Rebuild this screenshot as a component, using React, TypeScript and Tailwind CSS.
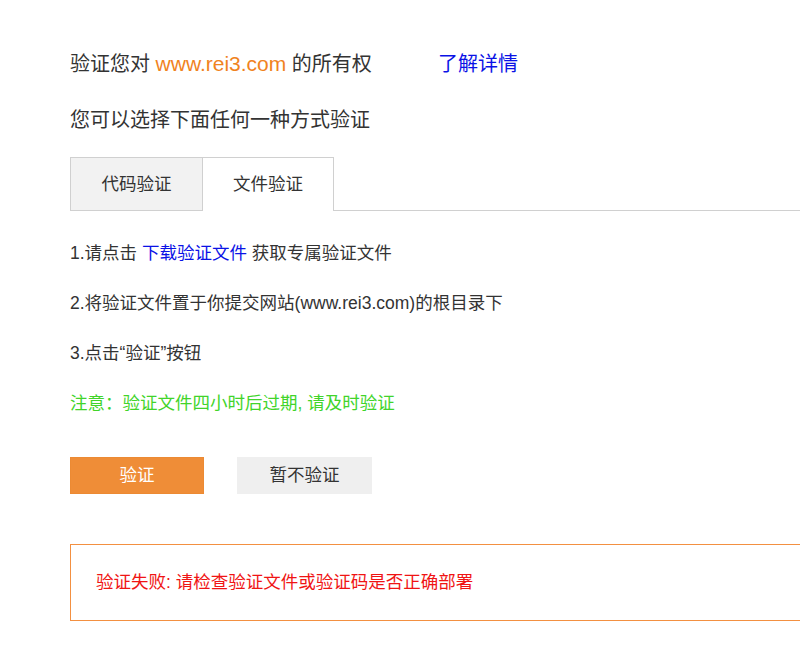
import React from "react";

export default function App() {
  const font = { fontFamily: '"Liberation Sans", "Noto Sans CJK SC", sans-serif' };
  return (
    <div className="w-[800px] h-[652px] overflow-hidden bg-white text-[#333]" style={font}>
      <div className="pl-[70px] pt-[44px]">
        <div className="flex h-[40px] items-center text-[20px] whitespace-nowrap">
          <span className="w-[368px] shrink-0">
            验证您对&nbsp;<span className="text-[21px] text-[#f0831e]">www.rei3.com</span>&nbsp;的所有权
          </span>
          <span className="text-[#0a12e6]">了解详情</span>
        </div>
        <div className="mt-[16px] flex h-[40px] items-center text-[20px]">您可以选择下面任何一种方式验证</div>

        <div className="mt-[17px] flex h-[54px] text-[17.5px]">
          <div className="flex w-[133px] items-center justify-center border border-[#d0d0d0] bg-[#f2f2f2]">代码验证</div>
          <div className="flex w-[131px] items-center justify-center border-t border-r border-[#d0d0d0] bg-white">文件验证</div>
          <div className="flex-1 border-b border-[#d0d0d0]"></div>
        </div>

        <div className="text-[17.5px]">
          <div className="mt-[27px] flex h-[30px] items-center whitespace-nowrap">
            1.请点击&nbsp;<span className="text-[#0a12e6]">下载验证文件</span>&nbsp;获取专属验证文件
          </div>
          <div className="mt-[20px] flex h-[30px] items-center whitespace-nowrap">
            2.将验证文件置于你提交网站(www.rei3.com)的根目录下
          </div>
          <div className="mt-[20px] flex h-[30px] items-center whitespace-nowrap">3.点击“验证”按钮</div>
          <div className="mt-[20px] flex h-[30px] items-center whitespace-nowrap text-[#41d42a]">
            注意：验证文件四小时后过期, 请及时验证
          </div>
        </div>

        <div className="mt-[39px] flex h-[37px] text-[17.5px]">
          <div className="flex w-[134px] items-center justify-center border border-[#ec8a33] bg-[#ef8d37] text-white">验证</div>
          <div className="ml-[33px] flex w-[135px] items-center justify-center bg-[#efefef] text-[#333]">暂不验证</div>
        </div>

        <div className="mt-[50px] flex h-[77px] w-[780px] items-center border border-[#f39041] pl-[25px] text-[17.5px] text-[#f01414] whitespace-nowrap">
          验证失败: 请检查验证文件或验证码是否正确部署
        </div>
      </div>
    </div>
  );
}
